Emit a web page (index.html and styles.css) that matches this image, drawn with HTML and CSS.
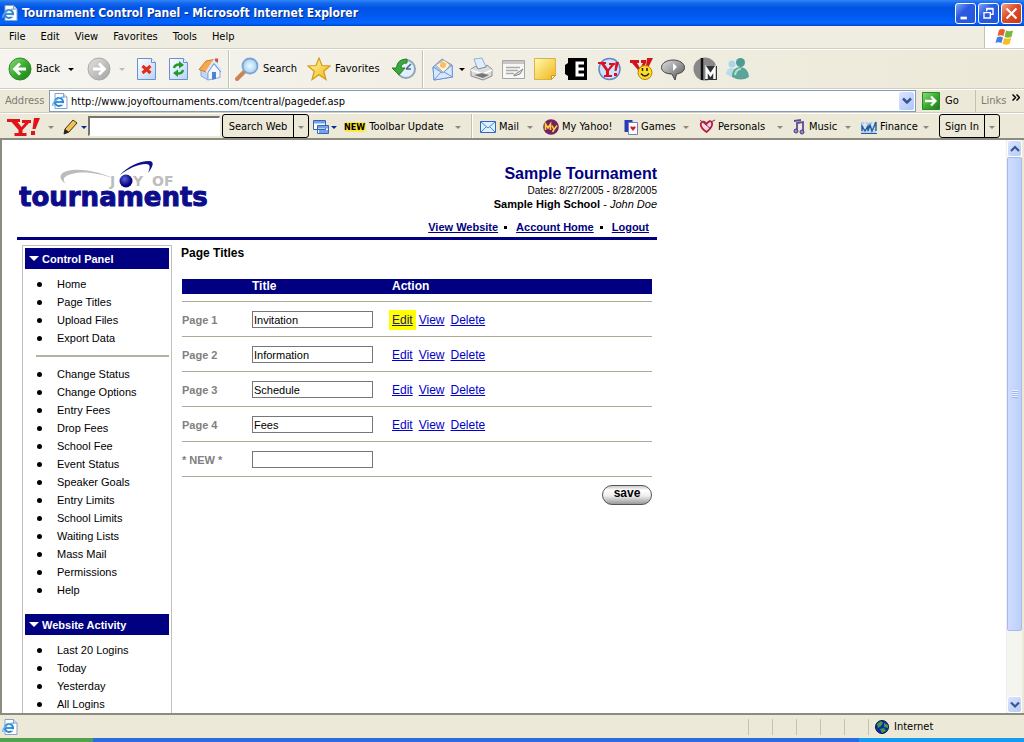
FILE: index.html
```html
<!DOCTYPE html>
<html lang="en">
<head>
<meta charset="utf-8">
<title>Tournament Control Panel</title>
<link rel="stylesheet" href="styles.css">
</head>
<body>
<svg class="defs" width="0" height="0" aria-hidden="true">
  <defs>
    <linearGradient id="green" x1="0" y1="0" x2="1" y2="1"><stop offset="0" stop-color="#8fdc7c"/><stop offset=".5" stop-color="#3aad30"/><stop offset="1" stop-color="#1c7c1c"/></linearGradient>
    <linearGradient id="grey" x1="0" y1="0" x2="1" y2="1"><stop offset="0" stop-color="#e2e2e2"/><stop offset="1" stop-color="#a2a2a2"/></linearGradient>
    <linearGradient id="paper" x1="0" y1="0" x2="1" y2="1"><stop offset="0" stop-color="#ffffff"/><stop offset="1" stop-color="#b8d2fa"/></linearGradient>
    <linearGradient id="gold" x1="0" y1="0" x2="1" y2="1"><stop offset="0" stop-color="#fffbb0"/><stop offset="1" stop-color="#f0b416"/></linearGradient>
    <radialGradient id="lens"><stop offset="0" stop-color="#f2fcff"/><stop offset="1" stop-color="#9fcff2"/></radialGradient>
    <radialGradient id="ball" cx=".4" cy=".35"><stop offset="0" stop-color="#5a64e0"/><stop offset="1" stop-color="#04047c"/></radialGradient>
    <linearGradient id="dark" x1="0" y1="0" x2="1" y2="1"><stop offset="0" stop-color="#e0e0e0"/><stop offset="1" stop-color="#555"/></linearGradient>
    <symbol id="ie" viewBox="0 0 16 16">
      <path d="M3 .5h8.500L15 4v11.500H3z" fill="#fff" stroke="#8ba2c4"/><path d="M11.500.5V4H15" fill="#d5e2f6" stroke="#8ba2c4"/>
      <circle cx="7" cy="9" r="4" fill="none" stroke="#2c86d8" stroke-width="2.200"/><path d="M3.500 9h7.500" stroke="#2c86d8" stroke-width="1.800"/><path d="M9 10.200h3v1.600H9z" fill="#fff"/>
      <path d="M1 13C-.5 9 8 3 12 4.500" fill="none" stroke="#64b1ee" stroke-width="1.300"/>
    </symbol>
  </defs>
</svg>

<header class="titlebar">
  <svg class="i16" viewBox="0 0 16 16"><use href="#ie"/></svg>
  <h1 class="window-title">Tournament Control Panel - Microsoft Internet Explorer</h1>
  <button class="winbtn" aria-label="Minimize"><svg viewBox="0 0 21 21"><path d="M5 14h7v3H5z" fill="#fff"/></svg></button>
  <button class="winbtn" aria-label="Restore"><svg viewBox="0 0 21 21" fill="none" stroke="#fff"><path d="M8.500 8V5.500h7v6H13M8 5h8" stroke-width="1.500"/><path d="M5.500 9.500h7v6h-7zM5 9.500h8" stroke-width="1.500"/></svg></button>
  <button class="winbtn close" aria-label="Close"><svg viewBox="0 0 21 21"><path d="M5 5l11 11M16 5L5 16" stroke="#fff" stroke-width="2.400"/></svg></button>
</header>

<nav class="menubar" aria-label="Menu">
  <button>File</button><button>Edit</button><button>View</button><button>Favorites</button><button>Tools</button><button>Help</button>
  <div class="flag"><svg viewBox="0 0 20 18" width="20" height="18"><path d="M4 2q3-2 6 0L8.500 8q-3-1.500-6 0z" fill="#ee5a2c"/><path d="M11 2.500q3 1.500 7 0L16.500 9q-4 1.500-7 0z" fill="#78b93c"/><path d="M2 9.500q3-2 6 0L6.500 15q-3-1.500-6 0z" fill="#3f7fe0"/><path d="M9.200 10q3 1.500 7 0L14.500 16q-3.500 1.500-7 0z" fill="#f8be20"/></svg></div>
</nav>

<div class="toolbar">
  <button class="tool"><svg class="i24" viewBox="0 0 24 24"><circle cx="12" cy="12" r="11" fill="url(#green)" stroke="#2a8a2a"/><path d="M18 12H7M12 6.500L6.500 12l5.500 5.500" fill="none" stroke="#fff" stroke-width="2.800"/></svg><span>Back</span><i class="caret black far"></i></button>
  <button class="tool" aria-label="Forward"><svg class="i24" viewBox="0 0 24 24"><circle cx="12" cy="12" r="11" fill="url(#grey)" stroke="#aaa"/><path d="M6 12h11M12 6.500l5.500 5.500-5.500 5.500" fill="none" stroke="#fff" stroke-width="2.800"/></svg><i class="caret faint far"></i></button>
  <button class="tool" aria-label="Stop"><svg class="i24" viewBox="0 0 24 24"><path d="M1.500 1.500h14l4 4v17h-18z" fill="url(#paper)" stroke="#6b91cf"/><path d="M15.500 1.500v4h4" fill="#fff" stroke="#6b91cf"/><path d="M6.500 9l8 7M14.500 9l-8 7" stroke="#e32c14" stroke-width="3"/></svg></button>
  <button class="tool" aria-label="Refresh"><svg class="i24" viewBox="0 0 24 24"><path d="M1.500 1.500h14l4 4v17h-18z" fill="url(#paper)" stroke="#6b91cf"/><path d="M15.500 1.500v4h4" fill="#fff" stroke="#6b91cf"/><path d="M6 11q1-4 6-3.500" fill="none" stroke="#23982d" stroke-width="2.500"/><path d="M11 4l5 4-5 3.500z" fill="#23982d"/><path d="M15 13q-1 4-6 3.500" fill="none" stroke="#23982d" stroke-width="2.500"/><path d="M10 20l-5-4 5-3.500z" fill="#23982d"/></svg></button>
  <button class="tool" aria-label="Home"><svg class="i24" viewBox="0 0 24 24"><path d="M3 12l7 2v9l-7-4z" fill="#c3d6f6" stroke="#8aa5d4"/><path d="M10 14l6-7 6 7v6.500L10 23z" fill="#f3f8ff" stroke="#8aa5d4"/><path d="M1 12.500L8 4l8-1.500L9.500 13.500 8 15z" fill="#f5a94e" stroke="#cf7b2c"/><path d="M8.500 15.500L16 4l7.500 9.500" fill="none" stroke="#dfe9fb" stroke-width="2.500"/><path d="M10 15.500l6-9 7 8.500" fill="none" stroke="#7292cc"/><path d="M17 1.500h3V6l-3-2z" fill="#c9503a"/><path d="M14 15h4v7l-4 .700z" fill="#4c82cf"/></svg></button>
  <i class="rule"></i>
  <button class="tool"><svg class="i24" viewBox="0 0 24 24"><path d="M2 22l8-8" stroke="#c98554" stroke-width="4" stroke-linecap="round"/><circle cx="15" cy="9" r="7.500" fill="url(#lens)" stroke="#7ba4d6" stroke-width="1.800"/></svg><span>Search</span></button>
  <button class="tool"><svg class="i24" viewBox="0 0 24 24"><path d="M12 1l3 7.500 8 .5-6.300 5.200L19 22.500l-7-4.700-7 4.700 2.300-8.300L1 9l8-.5z" fill="url(#gold)" stroke="#d69a16" stroke-width="1.200"/></svg><span>Favorites</span></button>
  <button class="tool" aria-label="History"><svg class="i24" viewBox="0 0 24 24"><circle cx="14" cy="12" r="9" fill="#e3f0fb" stroke="#8fa6bb" stroke-width="2"/><path d="M14 12l5-5M14 12h5" stroke="#456a90" stroke-width="1.500"/><path d="M15 2Q5 2 4.500 11H0l7 7 6-7H9q0-5 6-5z" fill="#3ca83c" stroke="#23822a"/></svg></button>
  <i class="rule"></i>
  <button class="tool" aria-label="Mail"><svg class="i24" viewBox="0 0 24 24"><path d="M2 10L11 2l10 6 .5 12L3 23z" fill="#a8cbf6" stroke="#6e95d6"/><path d="M5 8l8-5 6 5-6 8z" fill="#fff4d4" stroke="#d7ae77"/><circle cx="12" cy="8" r="3" fill="#f4bd70"/><path d="M2 10l9.500 6L21 8l.5 12L3 23z" fill="#d9e9ff" stroke="#6e95d6"/><path d="M3 23l7-8M21.500 20L13 15" stroke="#6e95d6"/></svg><i class="caret black"></i></button>
  <button class="tool" aria-label="Print"><svg class="i24" viewBox="0 0 24 24"><path d="M5 2l8-1 4 9-8 3z" fill="#dfeeff" stroke="#90aed8"/><path d="M2 12l5-3 2 3 8-2 1-2 5 4v7l-9 4-12-4z" fill="#dcdcdc" stroke="#8e8e8e"/><path d="M2 13l12 4 9-4" fill="none" stroke="#fff" stroke-width="1.500"/><path d="M5 18l9 3 6-3-7-2z" fill="#777"/></svg></button>
  <button class="tool" aria-label="Edit"><svg class="i24" viewBox="0 0 24 24"><path d="M1.500 3.500h22v18h-22z" fill="#f7f7f4" stroke="#a5a5a5"/><path d="M2 4h21v3H2z" fill="#c7c7c7"/><path d="M5 10.500h14M5 13.500h12M5 16.500h8" stroke="#aaa" stroke-width="1.300"/><path d="M13 18l9-6-3 5-6 2z" fill="#ddd" stroke="#8b8b8b"/></svg></button>
  <button class="tool" aria-label="Notes"><svg class="i24" viewBox="0 0 24 24"><path d="M1.500 1.500h21v17l-4 4h-17z" fill="url(#gold)" stroke="#d9b24a"/><path d="M22.500 18.500h-4v4z" fill="#fff6a8" stroke="#c59a30"/></svg></button>
  <button class="tool" aria-label="Encyclopedia"><svg class="i24" viewBox="0 0 24 24"><path d="M3 1h19v22H3v-4l-3-2V8l3-2z" fill="#000"/><path d="M19 6h-7v12h7M19 12h-8" fill="none" stroke="#fff" stroke-width="3"/></svg></button>
  <button class="tool" aria-label="Yahoo"><svg class="i24" viewBox="0 0 24 24"><circle cx="12.500" cy="12" r="10.500" fill="#cfe4fa" stroke="#6686c6" stroke-width="1.500"/><path d="M1 5h8v2H7.500l3.500 5 3-4h-2V6h6v2h-1l-5 6v4h3v2H7v-2h2v-4L4 7H1z" fill="#d9121f"/><path d="M18.500 5H22l-2.500 9h-2zM17 16h3v3h-3z" fill="#d9121f"/></svg></button>
  <button class="tool" aria-label="Yahoo Messenger"><svg class="i24" viewBox="0 0 24 24"><path d="M1 3h9v3H8l3 5 3-5h-2V3h5v3l-4 7v4H9v-4L3 6H1zM18 1h6l-4 8h-3z" fill="#d3141d"/><circle cx="16" cy="15.500" r="7" fill="#ffdc28" stroke="#b68400"/><path d="M13.500 11v3M18 11v3" stroke="#222" stroke-width="1.500"/><path d="M12 16.500q4 5 8 0" fill="none" stroke="#222" stroke-width="1.500"/></svg></button>
  <button class="tool" aria-label="Discuss"><svg class="i24" viewBox="0 0 24 24"><path d="M12 3C18 3 23.500 6 23.500 10.500c0 4-4 6-8 6.500l-1.500 6-3-6C5 17 .5 14.500.5 10.500.5 6 6 3 12 3z" fill="url(#dark)" stroke="#444"/><path d="M12 6v8l4-4z" fill="#fff"/></svg></button>
  <button class="tool" aria-label="Merriam"><svg class="i24" viewBox="0 0 24 24"><circle cx="12" cy="12" r="11.500" fill="#888"/><path d="M9 1v22" stroke="#111" stroke-width="2.500"/><path d="M12 9h12v14H12z" fill="#333"/><path d="M13.500 22V12l4 6 4-6v10" fill="none" stroke="#fff" stroke-width="2.500"/></svg></button>
  <button class="tool" aria-label="Messenger"><svg class="i24" viewBox="0 0 24 24"><circle cx="7" cy="7" r="3.500" fill="#a9d6e8"/><path d="M1 17q1-7 7-6l4 5-5 4z" fill="#b8dce9"/><circle cx="15.500" cy="5.500" r="4.500" fill="#4d9a97"/><path d="M7 20q0-10 8-10t9 10q-8 5-17 0z" fill="#5aa598"/><path d="M10 18q1-6 6-6" fill="none" stroke="#b3e2d1" stroke-width="2"/></svg></button>
</div>

<form class="address" onsubmit="return false">
  <label for="url">Address</label>
  <div class="urlbox">
    <svg class="i16" viewBox="0 0 16 16"><use href="#ie"/></svg>
    <input id="url" type="text" value="http://www.joyoftournaments.com/tcentral/pagedef.asp">
    <button type="button" class="drop" aria-label="Show addresses"><svg viewBox="0 0 10 8" width="10" height="8"><path d="M1 1.500l4 4 4-4" fill="none" stroke="#39568f" stroke-width="2.500"/></svg></button>
  </div>
  <button class="go"><svg viewBox="0 0 18 18" width="18" height="18"><path d="M.5.500h17v17H.5z" fill="url(#green)" stroke="#2a8a2a"/><path d="M3 9h10M9 4.500L13.500 9 9 13.500" fill="none" stroke="#fff" stroke-width="2.300"/></svg><span>Go</span></button>
  <span class="links">Links</span>
  <button type="button" class="more" aria-label="More links"><svg viewBox="0 0 8 7" width="8" height="7"><path d="M.5.500l3 3-3 3M4.500.5l3 3-3 3" fill="none" stroke="#000" stroke-width="1.500"/></svg></button>
</form>

<form class="yahoo" onsubmit="return false">
  <button type="button" class="yt" aria-label="Yahoo"><svg viewBox="0 0 33 18" width="33" height="18"><path d="M0 1h13v3h-2.500l4 5 3.500-4h-3V2h9v3h-2l-6.500 7v3h4v3H7.500v-3h4v-3L4.500 4H0z" fill="#e0131c"/><path d="M27 0h6l-4.500 11h-3zM24 13h4v4h-4z" fill="#e0131c"/></svg></button>
  <button type="button" class="yt" aria-label="Yahoo menu"><i class="caret"></i></button>
  <button type="button" class="yt tight" aria-label="Customize"><svg viewBox="0 0 16 16" width="16" height="16"><path d="M2 10l8-9 4 3-8 9-5 2z" fill="#f5c04c" stroke="#3c3424"/><path d="M2 10l4 3-5 2z" fill="#222"/></svg><i class="caret blue"></i></button>
  <input class="ysearch" type="text" aria-label="Web search">
  <div class="split"><button>Search Web</button><button type="button" aria-label="Search options"><i class="caret"></i></button></div>
  <button type="button" class="yt tight" aria-label="Pop-ups"><svg viewBox="0 0 16 16" width="16" height="16"><path d="M.5 1.500h12v9H.5zM4.500 6.500h11v8h-11z" fill="#fff" stroke="#3566bb"/><path d="M1 2h11v2.500H1zM5 7h10v2.500H5zM6 11h9v3H6z" fill="#77a3e6"/></svg><i class="caret blue"></i></button>
  <button type="button" class="yt"><b class="new">NEW</b><span>Toolbar Update</span><i class="caret end"></i></button>
  <i class="rule"></i>
  <button type="button" class="yt"><svg viewBox="0 0 16 12" width="16" height="12"><path d="M.5.500h15v11H.5z" fill="#dff0ff" stroke="#2e67c4"/><path d="M1 1l7 6 7-6M1 11l5-5M15 11l-5-5" fill="none" stroke="#3e86d8"/></svg><span>Mail</span><i class="caret end"></i></button>
  <button type="button" class="yt"><svg viewBox="0 0 16 16" width="16" height="16"><circle cx="8" cy="8" r="7.800" fill="#742063"/><path d="M2.500 11V5L5 9l2.500-4v6M9 6.500l2 4 3-4M11 10.500L9.500 13" fill="none" stroke="#ffd33b" stroke-width="1.600"/></svg><span>My Yahoo!</span></button>
  <button type="button" class="yt"><svg viewBox="0 0 14 16" width="14" height="16"><path d="M.5 1h8v12h-8z" fill="#2a3bb4"/><path d="M4.500 3.500h9v12h-9z" fill="#fff" stroke="#7180c0"/><path d="M9 8q3-2 2.500 1L9 12 6.500 9Q6 6 9 8z" fill="#d31d35"/></svg><span>Games</span><i class="caret end"></i></button>
  <button type="button" class="yt"><svg viewBox="0 0 16 16" width="16" height="16"><path d="M7.500 5Q11 0 13 4q1 4-5.500 9Q.5 8 2 4q2.500-3 5.500 1z" fill="#ffd9df" stroke="#b51e3b" stroke-width="1.800"/><path d="M1 1l11 9M12 3l4-2" stroke="#762a74"/></svg><span>Personals</span><i class="caret end"></i></button>
  <button type="button" class="yt"><svg viewBox="0 0 13 16" width="13" height="16"><path d="M4 12V4l6-1v9M1 2l7-1" fill="none" stroke="#5e4a97" stroke-width="1.800"/><circle cx="3" cy="12" r="2" fill="#9d82cc" stroke="#4b3b83"/><circle cx="9" cy="13" r="2" fill="#9d82cc" stroke="#4b3b83"/></svg><span>Music</span><i class="caret end"></i></button>
  <button type="button" class="yt"><svg viewBox="0 0 16 14" width="16" height="14"><path d="M0 2h15v11H0z" fill="#b4d0ea"/><path d="M0 5h15M0 8h15M4 2v10M8 2v10M12 2v10" stroke="#e8f2fa"/><path d="M1 11V6l3 5 3-5v5l2-6 2 6 4-9v9" fill="none" stroke="#275b9c" stroke-width="1.400"/><path d="M0 13.500h16" stroke="#275b9c"/></svg><span>Finance</span><i class="caret end"></i></button>
  <div class="split sign"><button type="button">Sign In</button><button type="button" aria-label="Sign in options"><i class="caret"></i></button></div>
</form>

<div class="viewport">
  <main class="page">
    <header class="site-head">
      <svg class="logo" viewBox="0 0 200 50" width="200" height="50" role="img" aria-label="Joy of Tournaments">
        <path d="M47 23C38 17 40 10 54 9c15-1 31 4 42 9C80 12 64 10 53 13c-9 2-10 6-6 10z" fill="#bbb"/>
        <path d="M101 14C108 6 120 0 130 0c6 0 4 6-1 12 2-5 3-9-2-9-9 0-18 5-26 11z" fill="#10108c"/>
        <text class="logo-top" x="91" y="25">J</text><text class="logo-top" x="114" y="25">Y</text><text class="logo-top" x="133" y="25">OF</text>
        <text class="logo-main" x="0" y="45">tournaments</text>
        <circle cx="107" cy="20" r="6.500" fill="url(#ball)"/>
      </svg>
      <div class="event">
        <h2>Sample Tournament</h2>
        <p class="dates">Dates: 8/27/2005 - 8/28/2005</p>
        <p class="host"><b>Sample High School</b> - <em>John Doe</em></p>
        <p class="account"><a href="#website">View Website</a><i class="sq"></i><a href="#account">Account Home</a><i class="sq"></i><a href="#logout">Logout</a></p>
      </div>
    </header>
    <div class="columns">
      <nav class="side" aria-label="Control panel">
        <h3>Control Panel</h3>
        <ul>
          <li>Home</li><li>Page Titles</li><li>Upload Files</li><li>Export Data</li>
        </ul>
        <hr>
        <ul>
          <li>Change Status</li><li>Change Options</li><li>Entry Fees</li><li>Drop Fees</li><li>School Fee</li><li>Event Status</li><li>Speaker Goals</li><li>Entry Limits</li><li>School Limits</li><li>Waiting Lists</li><li>Mass Mail</li><li>Permissions</li><li>Help</li>
        </ul>
        <h3 class="second">Website Activity</h3>
        <ul>
          <li>Last 20 Logins</li><li>Today</li><li>Yesterday</li><li>All Logins</li>
        </ul>
      </nav>
      <form class="titles" onsubmit="return false">
        <h3>Page Titles</h3>
        <table>
          <thead><tr><th class="c1"></th><th class="c2">Title</th><th>Action</th></tr></thead>
          <tbody>
            <tr><td><label for="p1">Page 1</label></td><td><input id="p1" type="text" value="Invitation"></td><td><a class="hot" href="#e1">Edit</a><a href="#v1">View</a><a href="#d1">Delete</a></td></tr>
            <tr><td><label for="p2">Page 2</label></td><td><input id="p2" type="text" value="Information"></td><td><a href="#e2">Edit</a><a href="#v2">View</a><a href="#d2">Delete</a></td></tr>
            <tr><td><label for="p3">Page 3</label></td><td><input id="p3" type="text" value="Schedule"></td><td><a href="#e3">Edit</a><a href="#v3">View</a><a href="#d3">Delete</a></td></tr>
            <tr><td><label for="p4">Page 4</label></td><td><input id="p4" type="text" value="Fees"></td><td><a href="#e4">Edit</a><a href="#v4">View</a><a href="#d4">Delete</a></td></tr>
            <tr><td><label for="p5">* NEW *</label></td><td><input id="p5" type="text"></td><td></td></tr>
          </tbody>
        </table>
        <button class="save">save</button>
      </form>
    </div>
  </main>
  <div class="scroll">
    <button aria-label="Scroll up"><svg viewBox="0 0 10 8" width="10" height="8"><path d="M1 6l4-4 4 4" fill="none" stroke="#39568f" stroke-width="2.200"/></svg></button>
    <div class="track"><div class="thumb"><i></i></div></div>
    <button aria-label="Scroll down"><svg viewBox="0 0 10 8" width="10" height="8"><path d="M1 1.500l4 4 4-4" fill="none" stroke="#39568f" stroke-width="2.200"/></svg></button>
  </div>
</div>

<footer class="status">
  <svg class="i16" viewBox="0 0 16 16"><use href="#ie"/></svg>
  <div class="cells"><i></i><i></i><i></i><i></i><i></i></div>
  <div class="zone"><svg viewBox="0 0 14 14" width="14" height="14"><circle cx="7" cy="7" r="6.500" fill="#1426a8" stroke="#0a1340"/><path d="M2 4l4-3 2 2-2 3-3 2zM9 3l4 2v3L9 7zM5 9l4-1 2 3-4 2z" fill="#3aa33d"/></svg><span>Internet</span></div>
</footer>
<div class="taskbar"><i class="start"></i><i class="tasks"></i><i class="tray"></i></div>
</body>
</html>
```
FILE: styles.css
```css
* { box-sizing: border-box; }
body {
  margin: 0;
  height: 100vh;
  display: flex;
  flex-direction: column;
  overflow: hidden;
  background: #ece9d8;
  color: #000;
  font: 11px/14px "DejaVu Sans Condensed", "DejaVu Sans", sans-serif;
}
.defs { position: absolute; }
svg { display: block; flex: none; }
button { border: 0; padding: 0; margin: 0; background: none; color: inherit; font: inherit; white-space: nowrap; }
h1, h2, h3, p, ul { margin: 0; padding: 0; }
.i16 { width: 16px; height: 16px; }
.i24 { width: 24px; height: 24px; }

.caret { flex: none; width: 0; height: 0; border: 3px solid transparent; border-top-color: #8a887c; border-bottom: 0; }
.caret.black { border-top-color: #000; }
.caret.faint { border-top-color: #bbb; }
.caret.far { margin-left: 4px; }
.caret.blue { border-top-color: #0a2a9c; }
.caret.end { margin-left: auto; margin-right: 10px; }
.rule { width: 2px; height: 100%; border-left: 1px solid #c5c2b2; border-right: 1px solid #fff; }

.titlebar {
  flex: none;
  height: 26px;
  display: flex;
  align-items: center;
  gap: 2px;
  padding: 0 2px;
  background: linear-gradient(#2f86f5 0, #1668ee 12%, #0054e3 30%, #0058ee 60%, #0366ff 88%, #0145d0);
}
.window-title { flex: 1; padding-left: 2px; color: #fff; font: bold 12px/16px "DejaVu Sans Condensed", sans-serif; text-shadow: 1px 1px #0a2a80; white-space: nowrap; }
.winbtn { width: 21px; height: 21px; border: 1px solid #fff; border-radius: 3px; background: linear-gradient(135deg, #7da5f5, #2a5be0 40%, #2457dc); }
.winbtn svg { width: 19px; height: 19px; }
.winbtn.close { background: linear-gradient(135deg, #f2a187, #dd4c28 45%, #c93a16); }

.menubar { flex: none; height: 23px; display: flex; padding-left: 9px; gap: 15px; background: #efede2; border-bottom: 1px solid #d2cfbf; }
.flag { margin-left: auto; width: 40px; display: grid; place-items: center; background: #fff; border-left: 1px solid #c5c2b2; }

.toolbar {
  flex: none;
  height: 40px;
  display: grid;
  grid-template-columns: 79px 49px 32px 30px 30px 7px 72px 85px 30px 9px 38px repeat(8, 32px) 32px;
  align-items: center;
  padding: 0 8px;
  background: linear-gradient(90deg, #f5f4ef, #ece9d8);
  border-top: 1px solid #fff;
  border-bottom: 1px solid #d2cfbf;
}
.tool { display: flex; align-items: center; gap: 4px; }

.address { flex: none; height: 24px; display: flex; align-items: center; padding-left: 5px; color: #7d7b70; border-top: 1px solid #fff; border-bottom: 1px solid #d2cfbf; }
.address label { width: 44px; }
.urlbox { flex: 1; height: 22px; display: flex; align-items: center; padding: 1px 1px 1px 2px; background: #fff; border: 1px solid #7f9db9; }
.urlbox input { flex: 1; min-width: 0; border: 0; padding: 1px 3px 0; outline: 0; font: inherit; background: none; color: #000; }
.drop { width: 15px; height: 18px; display: grid; place-items: center; background: linear-gradient(135deg, #dbe5fe, #b0c6f7); border-radius: 2px; }
.go { display: flex; align-items: center; gap: 5px; width: 53px; margin-left: 6px; color: #000; }
.links { border-left: 1px solid #c5c2b2; padding-left: 5px; width: 37px; height: 22px; line-height: 22px; }
.more { align-self: flex-start; margin: 4px 4px 0 0; }

.yahoo {
  flex: none;
  height: 27px;
  display: grid;
  grid-template-columns: 41px 15px 25px 134px 91px 31px 127px 9px 63px 81px 75px 94px 68px 78px 61px;
  align-items: center;
  padding-left: 7px;
  border-top: 1px solid #fff;
  border-bottom: 2px solid #8d8b80;
}
.yt { display: flex; align-items: center; gap: 3px; padding-top: 2px; }
.yt.tight { gap: 2px; }
.new { padding-right: 1px; background: #ffe63a; font-size: 9px; line-height: 10px; border-radius: 4px; }
.ysearch { width: 132px; height: 20px; font: inherit; background: #fff; border: 1px solid #fff; border-top: 2px solid #77756b; border-left: 2px solid #77756b; }
.split { display: flex; width: 87px; height: 24px; border: 1px solid #000; border-radius: 3px; }
.split button { flex: 1; padding-top: 2px; }
.split button + button { flex: 0 0 15px; display: grid; place-items: center; border-left: 1px solid #000; }
.split.sign { width: 61px; }

.viewport { flex: 1; min-height: 0; display: flex; background: #fff; border-left: 2px solid #8d8b80; border-right: 2px solid #ece9d8; }
.page { flex: 1; min-width: 0; overflow: hidden; padding: 10px 15px 0; font-family: "Liberation Sans", Arial, sans-serif; }
.site-head { max-width: 640px; height: 90px; display: flex; justify-content: space-between; border-bottom: 3px solid #000080; }
.logo { margin: 11px 0 0 2px; }
.logo-top { font: bold 14px "DejaVu Sans", sans-serif; fill: #bdbdbd; }
.logo-main { font: bold 26px "DejaVu Sans", sans-serif; fill: #0c0c8c; stroke: #0c0c8c; stroke-width: 1px; }
.event { text-align: right; padding-top: 14px; }
.event h2 { color: #000080; font-size: 16px; line-height: 20px; }
.dates { font-size: 10px; line-height: 13px; }
.host { line-height: 14px; }
.account { display: flex; justify-content: flex-end; align-items: center; padding: 9px 8px 0 0; font-weight: bold; font-size: 11px; line-height: 14px; }
.account a { color: #000080; }
.sq { width: 3px; height: 3px; margin: 0 9px 0 6px; background: #000; }

.columns { max-width: 640px; display: flex; }
.side { flex: none; width: 150px; margin: 5px 8px 0 5px; padding: 2px; border: 1px solid #c2bfbc; }
.side h3 { display: flex; align-items: center; gap: 3px; height: 21px; padding-left: 4px; margin-bottom: 6px; background: #000080; color: #fff; font-size: 11px; }
.side h3::before { content: ""; border: 5px solid transparent; border-top-color: #fff; border-bottom: 0; }
.side h3.second { margin-top: 15px; }
.side ul { list-style: none; }
.side li { display: flex; align-items: center; height: 18px; padding-left: 12px; gap: 15px; }
.side li::before { content: ""; width: 5px; height: 5px; border-radius: 50%; background: #000; }
.side hr { height: 2px; margin: 8px 0 8px 11px; border: 0; background: #b5b2a4; }

.titles { flex: 1; padding: 6px 5px 0 1px; }
.titles h3 { font-size: 12px; line-height: 14px; }
.titles table { width: calc(100% - 1px); table-layout: fixed; margin: 19px 0 0 1px; border-collapse: collapse; }
.titles th { height: 15px; padding: 0; background: #000080; color: #fff; font-size: 12px; line-height: 15px; text-align: left; }
.c1 { width: 70px; }
.c2 { width: 140px; }
.titles tbody::before { content: ""; display: table-row; height: 7px; }
.titles td { height: 35px; padding: 2px 0 0; border: 1px solid #adab98; border-width: 1px 0; vertical-align: middle; }
.titles label { color: #808080; font-weight: bold; }
.titles td input { display: block; width: 121px; height: 17px; padding: 0 1px; border: 1px solid #777; font: inherit; }
.titles td a { margin-right: 6px; color: #0000c8; font-size: 12px; line-height: 14px; }
.titles td .hot { background: #ff0; color: #202060; box-shadow: 0 0 0 3px #ff0; }
.save { display: block; width: 50px; height: 20px; margin: 8px 0 0 auto; border: 1px solid #555; border-radius: 10px; background: linear-gradient(#ccc, #fff 25%, #eee 55%, #999); font-weight: bold; font-size: 12px; line-height: 14px; padding-bottom: 3px; }

.scroll { flex: none; width: 16px; display: flex; flex-direction: column; background: #f5f5f0; border-left: 1px solid #eee; }
.scroll button { flex: none; height: 17px; display: grid; place-items: center; border: 1px solid #fff; border-radius: 3px; background: linear-gradient(135deg, #d9e4fe, #b7cbf9); }
.track { flex: 1; }
.thumb { height: 88%; display: grid; place-items: center; border: 1px solid #a5bbe8; border-radius: 2px; background: linear-gradient(90deg, #cfdcfe, #bdd0fb); }
.thumb i { width: 6px; height: 8px; background: repeating-linear-gradient(#eef3ff 0 1px, #9db6ea 1px 2px); }

.status { flex: none; height: 25px; display: flex; align-items: center; padding: 3px 2px 2px; border-top: 2px solid #8d8b80; }
.cells { margin-left: auto; display: flex; height: 16px; }
.cells i { width: 24px; border-left: 1px solid #c5c2b2; }
.zone { display: flex; align-items: center; gap: 5px; width: 154px; height: 16px; padding-left: 6px; border-left: 1px solid #c5c2b2; }
.taskbar { flex: none; height: 4px; display: flex; }
.start { flex: 93; background: #55a04e; }
.tasks { flex: 766; background: #2c6ce0; }
.tray { flex: 165; background: #149cee; }
```
